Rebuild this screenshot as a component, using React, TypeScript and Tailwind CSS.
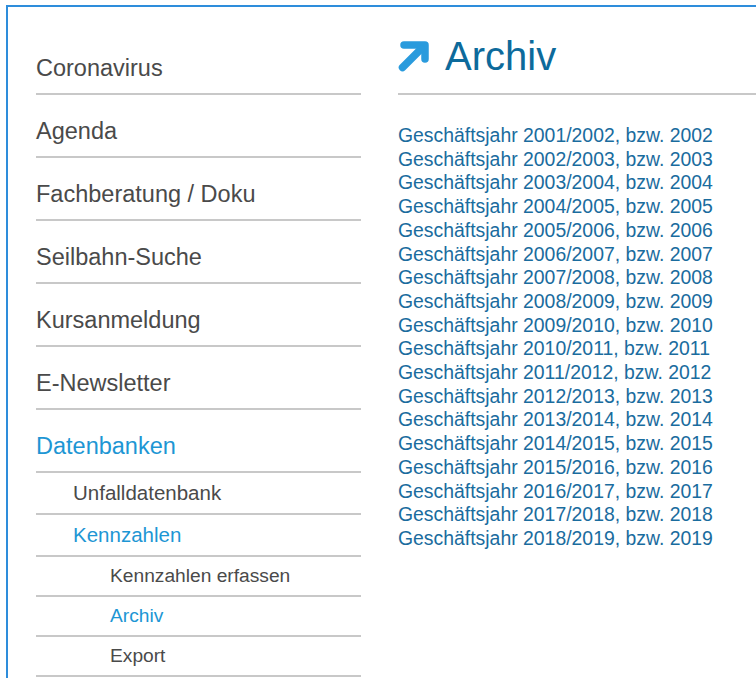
import React from "react";

type NavItem = { label: string; level: 0 | 1 | 2; active?: boolean };

const nav: NavItem[] = [
  { label: "Coronavirus", level: 0 },
  { label: "Agenda", level: 0 },
  { label: "Fachberatung / Doku", level: 0 },
  { label: "Seilbahn-Suche", level: 0 },
  { label: "Kursanmeldung", level: 0 },
  { label: "E-Newsletter", level: 0 },
  { label: "Datenbanken", level: 0, active: true },
  { label: "Unfalldatenbank", level: 1 },
  { label: "Kennzahlen", level: 1, active: true },
  { label: "Kennzahlen erfassen", level: 2 },
  { label: "Archiv", level: 2, active: true },
  { label: "Export", level: 2 },
];

const years = Array.from({ length: 18 }, (_, i) => 2001 + i);

function ArrowIcon() {
  return (
    <svg width="31" height="31" viewBox="0 0 31 31" fill="none" className="shrink-0">
      <polyline
        points="6,4 27,4 27,18"
        stroke="#2a9bdd"
        strokeWidth="7.5"
        strokeLinejoin="round"
        strokeLinecap="round"
      />
      <line x1="4.5" y1="26.5" x2="23" y2="8" stroke="#2a9bdd" strokeWidth="7.5" strokeLinecap="round" />
    </svg>
  );
}

function NavRow({ item }: { item: NavItem }) {
  const color = item.active ? "text-[#1d96d4]" : "text-[#4a4a4a]";
  if (item.level === 0) {
    return (
      <a
        href="#"
        className={`block border-b-2 border-[#c8c8c8] pt-[22px] pb-[11px] text-[23.5px] leading-[28px] ${color}`}
      >
        {item.label}
      </a>
    );
  }
  if (item.level === 1) {
    return (
      <a
        href="#"
        className={`block border-b-2 border-[#c8c8c8] pl-[37px] pt-[8px] pb-[8px] text-[20.5px] leading-[24px] ${color}`}
      >
        {item.label}
      </a>
    );
  }
  return (
    <a
      href="#"
      className={`block border-b-2 border-[#c8c8c8] pl-[74px] pt-[7px] pb-[8px] text-[19.2px] leading-[23px] ${color}`}
    >
      {item.label}
    </a>
  );
}

export default function App() {
  return (
    <div
      className="min-h-screen bg-white pt-[5px] pl-[6px]"
      style={{ fontFamily: '"Liberation Sans", Arial, sans-serif' }}
    >
      <div className="flex min-h-[673px] border-t-2 border-l-2 border-[#2e8ddb] pl-[28px] pt-[25px]">
        <nav className="w-[325px] shrink-0">
          {nav.map((item) => (
            <NavRow key={item.label + item.level} item={item} />
          ))}
        </nav>
        <main className="ml-[37px] flex-1 -mt-[25px]">
          <div className="flex items-center gap-[16px] border-b-2 border-[#c8c8c8] pt-[25px] pb-[13px]">
            <ArrowIcon />
            <h1 className="text-[40px] leading-[48px] text-[#0d6a9b]">Archiv</h1>
          </div>
          <ul className="mt-[29px]">
            {years.map((y) => (
              <li key={y} className="text-[19.4px] leading-[23.7px] text-[#1a6c9e]">
                <a href="#">
                  Geschäftsjahr {y}/{y + 1}, bzw. {y + 1}
                </a>
              </li>
            ))}
          </ul>
        </main>
      </div>
    </div>
  );
}
